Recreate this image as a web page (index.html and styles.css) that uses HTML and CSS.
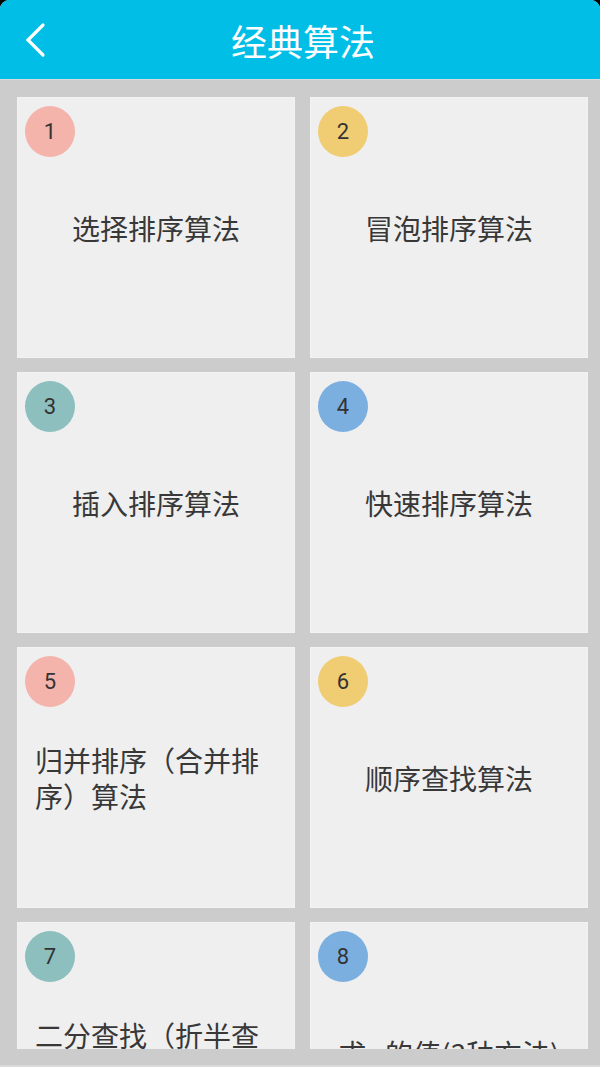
FILE: index.html
```
<!DOCTYPE html>
<html lang="zh-CN">
<head>
<meta charset="utf-8">
<title>经典算法</title>
<link rel="stylesheet" href="styles.css">
</head>
<body>
<div class="screen">
  <header class="header">
    <svg class="back" width="24" height="36" viewBox="0 0 24 36" aria-hidden="true">
      <polyline points="18,3 3,18 18,33" fill="none" stroke="#ffffff" stroke-width="3.2" stroke-linecap="round" stroke-linejoin="miter"/>
    </svg>
    <h1 class="title">经典算法</h1>
  </header>
  <main class="content">
    <div class="grid">
      <div class="card"><span class="num c-pink">1</span><p class="label">选择排序算法</p></div>
      <div class="card"><span class="num c-yellow">2</span><p class="label">冒泡排序算法</p></div>
      <div class="card"><span class="num c-teal">3</span><p class="label">插入排序算法</p></div>
      <div class="card"><span class="num c-blue">4</span><p class="label">快速排序算法</p></div>
      <div class="card"><span class="num c-pink">5</span><p class="label">归并排序（合并排序）算法</p></div>
      <div class="card"><span class="num c-yellow">6</span><p class="label">顺序查找算法</p></div>
      <div class="card"><span class="num c-teal">7</span><p class="label">二分查找（折半查找）</p></div>
      <div class="card"><span class="num c-blue">8</span><p class="label">求π的值(3种方法)</p></div>
    </div>
  </main>
  <div class="footline"></div>
</div>
</body>
</html>
```
FILE: styles.css
```
html, body {
  margin: 0;
  padding: 0;
  background: #000000;
}
.screen {
  width: 600px;
  height: 1067px;
  background: #cccccc;
  border-radius: 9px 9px 0 0;
  overflow: hidden;
  display: flex;
  flex-direction: column;
  font-family: "Noto Sans CJK SC", "Noto Sans", sans-serif;
}
.header {
  height: 79px;
  flex: none;
  background: #00bee6;
  border-bottom: 1px solid #d9d9d9;
  display: flex;
  align-items: center;
  justify-content: center;
  position: relative;
}
.back {
  position: absolute;
  left: 25px;
  top: 22px;
}
.title {
  margin: 0;
  color: #ffffff;
  font-size: 36px;
  font-weight: 400;
  line-height: 1;
  padding-left: 6px;
}
.content {
  flex: 1;
  padding: 17px 12px 16px 17px;
  min-height: 0;
}
.grid {
  height: 952px;
  overflow: hidden;
  display: grid;
  grid-template-columns: 278px 278px;
  grid-auto-rows: 261px;
  column-gap: 15px;
  row-gap: 14px;
}
.card {
  background: #efefef;
  box-shadow: inset 0 0 0 1px #f3f3f3;
  position: relative;
  display: flex;
  align-items: center;
  justify-content: center;
  padding: 0 18px;
}
.num {
  position: absolute;
  left: 8px;
  top: 9px;
  width: 50px;
  height: 51px;
  border-radius: 50%;
  display: flex;
  align-items: center;
  justify-content: center;
  font-family: Roboto, "Noto Sans", sans-serif;
  font-size: 22px;
  color: #333333;
}
.c-pink { background: #f4b3ab; }
.c-yellow { background: #f0cc72; }
.c-teal { background: #8cbfbe; }
.c-blue { background: #7bafe0; }
.label {
  margin: 0;
  font-size: 28px;
  line-height: 36px;
  color: #383838;
  max-width: 242px;
}
.footline {
  height: 2px;
  flex: none;
  background: #dadada;
}
```
